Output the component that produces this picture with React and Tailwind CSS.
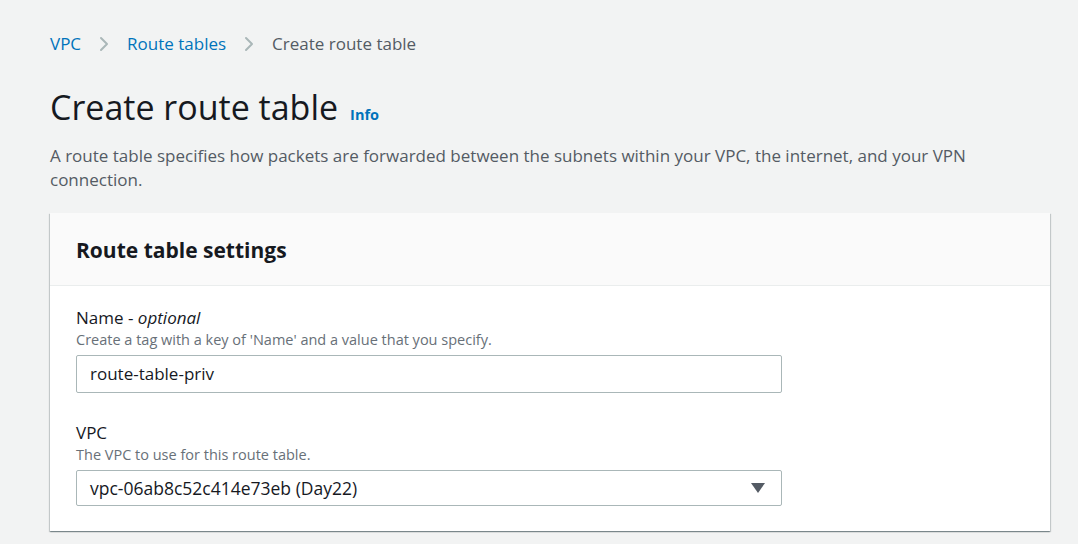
import { ChevronRight } from "lucide-react";

const font = { fontFamily: '"Open Sans", "Noto Sans", Arial, sans-serif' };

function Breadcrumbs() {
  return (
    <nav className="flex items-center h-[24px] text-[17px] leading-[24px]">
      <span className="text-[#0073bb]">VPC</span>
      <ChevronRight className="w-[24px] h-[24px] mx-[11px] text-[#aab7b8]" strokeWidth={2} />
      <span className="text-[#0073bb]">Route tables</span>
      <ChevronRight className="w-[24px] h-[24px] mx-[11px] text-[#aab7b8]" strokeWidth={2} />
      <span className="text-[#545b64]">Create route table</span>
    </nav>
  );
}

function Field({ label, optional, hint, children }) {
  return (
    <div>
      <div className="text-[17px] leading-[23px] text-[#16191f]">
        {label}
        {optional && (
          <>
            {" - "}
            <i>optional</i>
          </>
        )}
      </div>
      <div className="text-[14.5px] leading-[21px] text-[#687078]">{hint}</div>
      <div className="mt-[5px] w-[706px]">{children}</div>
    </div>
  );
}

export default function App() {
  return (
    <div className="min-h-[544px] bg-[#f2f3f3] pl-[50px] pr-[28px] pt-[32px]" style={font}>
      <Breadcrumbs />

      <div className="mt-[29px] flex items-baseline">
        <h1 className="text-[34px] leading-[44px] text-[#16191f] font-normal">Create route table</h1>
        <span className="ml-[12px] text-[14.5px] font-bold text-[#0073bb]">Info</span>
      </div>

      <p className="mt-[15px] text-[17px] leading-[24px] text-[#545b64] max-w-[940px]">
        A route table specifies how packets are forwarded between the subnets within your VPC, the internet, and your VPN connection.
      </p>

      <div className="mt-[21px] w-[1000px] bg-white shadow-[0_1px_1px_0_rgba(0,28,36,0.3),1px_1px_1px_0_rgba(0,28,36,0.15),-1px_1px_1px_0_rgba(0,28,36,0.15)]">
        <div className="h-[73px] bg-[#fafafa] border-b border-[#eaeded] px-[26px] pt-[3px] flex items-center">
          <h2 className="text-[21px] font-bold text-[#16191f]">Route table settings</h2>
        </div>

        <div className="px-[26px] pt-[20px] pb-[25px] flex flex-col gap-[28px]">
          <Field label="Name" optional hint="Create a tag with a key of 'Name' and a value that you specify.">
            <div className="h-[38px] border border-[#aab7b8] rounded-[2px] flex items-center px-[13px] text-[17px] text-[#16191f]">
              route-table-priv
            </div>
          </Field>

          <Field label="VPC" hint="The VPC to use for this route table.">
            <div className="h-[36px] border border-[#aab7b8] rounded-[2px] flex items-center justify-between px-[13px] text-[17.5px] text-[#16191f]">
              <span>vpc-06ab8c52c414e73eb (Day22)</span>
              <svg width="14" height="10" viewBox="0 0 14 10" className="mr-[3px]">
                <path d="M0 0h14L7 10z" fill="#545b64" />
              </svg>
            </div>
          </Field>
        </div>
      </div>
    </div>
  );
}
